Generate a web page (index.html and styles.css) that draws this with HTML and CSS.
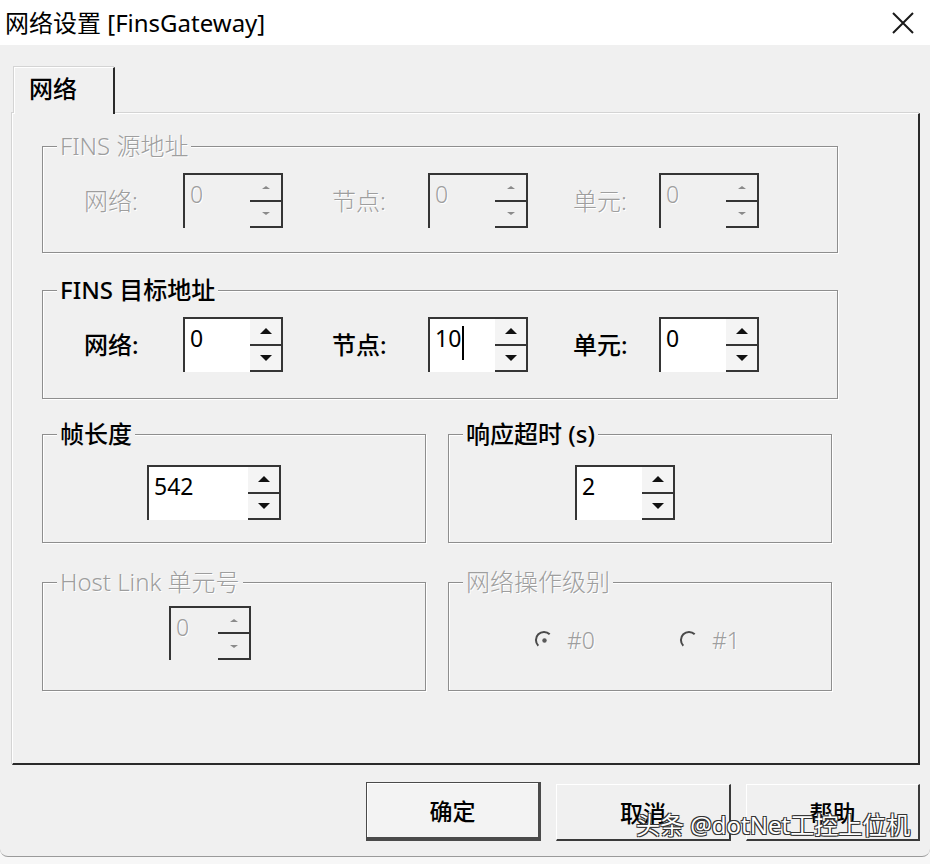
FILE: index.html
```html
<!DOCTYPE html>
<html lang="zh-CN">
<head>
  <meta charset="UTF-8" />
  <title>网络设置 [FinsGateway]</title>
  <link rel="stylesheet" href="styles.css">
</head>
<body>

  <div class="window">
    <div class="titlebar">
      <span class="title">网络设置 [FinsGateway]</span>
      <span class="close">
        <svg width="22" height="22" viewBox="0 0 22 22">
          <path d="M1 1 L21 21 M21 1 L1 21" stroke="#1a1a1a" stroke-width="2" fill="none"/>
        </svg>
      </span>
    </div>

    <div class="client">
      <div class="tabs">
        <div class="tab">网络</div>
      </div>

      <div class="tab-panel">
        <!-- FINS source address (disabled) -->
        <div class="group group-full disabled">
          <div class="legend">FINS 源地址</div>
          <div class="addr-row">
            <span class="label">网络:</span>
            <div class="spin"><div class="spin-text">0</div><div class="spin-btns"><span class="spin-up"></span><span class="spin-down"></span></div></div>
            <span class="label">节点:</span>
            <div class="spin"><div class="spin-text">0</div><div class="spin-btns"><span class="spin-up"></span><span class="spin-down"></span></div></div>
            <span class="label">单元:</span>
            <div class="spin"><div class="spin-text">0</div><div class="spin-btns"><span class="spin-up"></span><span class="spin-down"></span></div></div>
          </div>
        </div>

        <!-- FINS target address -->
        <div class="group group-full group-target">
          <div class="legend">FINS 目标地址</div>
          <div class="addr-row">
            <span class="label">网络:</span>
            <div class="spin"><div class="spin-text">0</div><div class="spin-btns"><span class="spin-up"></span><span class="spin-down"></span></div></div>
            <span class="label">节点:</span>
            <div class="spin"><div class="spin-text">10<span class="caret"></span></div><div class="spin-btns"><span class="spin-up"></span><span class="spin-down"></span></div></div>
            <span class="label">单元:</span>
            <div class="spin"><div class="spin-text">0</div><div class="spin-btns"><span class="spin-up"></span><span class="spin-down"></span></div></div>
          </div>
        </div>

        <div class="group-row row-frame">
          <div class="group frame-len">
            <div class="legend">帧长度</div>
            <div class="spin spin-wide"><div class="spin-text">542</div><div class="spin-btns"><span class="spin-up"></span><span class="spin-down"></span></div></div>
          </div>
          <div class="group timeout">
            <div class="legend">响应超时 (s)</div>
            <div class="spin"><div class="spin-text">2</div><div class="spin-btns"><span class="spin-up"></span><span class="spin-down"></span></div></div>
          </div>
        </div>

        <div class="group-row row-host">
          <div class="group host-link disabled">
            <div class="legend">Host Link 单元号</div>
            <div class="spin spin-small"><div class="spin-text">0</div><div class="spin-btns"><span class="spin-up"></span><span class="spin-down"></span></div></div>
          </div>
          <div class="group op-level disabled">
            <div class="legend">网络操作级别</div>
            <div class="radios">
              <label class="radio">
                <svg width="20" height="20" viewBox="0 0 20 20">
                  <path d="M4.3 15.7 A8 8 0 0 1 15.7 4.3" stroke="#4a4a4a" stroke-width="2" fill="none"/>
                  <circle cx="10.5" cy="10.5" r="2.2" fill="#5a5a5a"/>
                </svg>
                <span>#0</span>
              </label>
              <label class="radio">
                <svg width="20" height="20" viewBox="0 0 20 20">
                  <path d="M4.3 15.7 A8 8 0 0 1 15.7 4.3" stroke="#4a4a4a" stroke-width="2" fill="none"/>
                </svg>
                <span>#1</span>
              </label>
            </div>
          </div>
        </div>
      </div>

      <div class="buttons">
        <button class="btn btn-default">确定</button>
        <button class="btn">取消</button>
        <button class="btn btn-help">帮助</button>
      </div>
    </div>

    <div class="watermark">头条 @dotNet工控上位机</div>
  </div>

</body>
</html>
```

FILE: styles.css
```css
* {
  box-sizing: border-box;
}

html {
  background: #f7f7f7;
}

body {
  margin: 0;
  font-family: "Noto Sans", "Noto Sans CJK SC", sans-serif;
  font-size: 24px;
  color: #000;
}

.window {
  position: relative;
  width: 930px;
  height: 857px;
  background: #f0f0f0;
  border-bottom: 1px solid #9a9a9a;
  border-radius: 0 0 8px 8px;
  overflow: hidden;
}

/* Title bar */
.titlebar {
  display: flex;
  align-items: center;
  height: 45px;
  padding-left: 5px;
  background: #fff;
}

.title {
  font-size: 24px;
  line-height: 30px;
}

.close {
  margin-left: auto;
  margin-right: 16px;
  display: flex;
}

/* Client area */
.client {
  padding: 22px 10px 0 12px;
}

.tabs {
  display: flex;
}

.tab {
  position: relative;
  z-index: 1;
  width: 101px;
  height: 47px;
  margin-left: 2px;
  margin-bottom: -1px;
  padding: 6px 0 0 14px;
  line-height: 30px;
  font-weight: 500;
  background: #f0f0f0;
  border-top: 1px solid #fff;
  border-left: 1px solid #fff;
  border-right: 2px solid #2a2a2a;
  box-shadow: -1px -1px 0 #d4d4d4;
}

.tab-panel {
  height: 652px;
  padding: 32px 0 0 29px;
  border-top: 1px solid #fff;
  border-left: 1px solid #fff;
  border-right: 2px solid #2a2a2a;
  border-bottom: 2px solid #2a2a2a;
  box-shadow: -1px -1px 0 #d4d4d4;
}

/* Group boxes */
.group {
  position: relative;
  height: 109px;
  border: 1px solid #8e8e8e;
  box-shadow: inset 1px 1px 0 #fff, 1px 1px 0 #fff;
}

.group-full {
  width: 796px;
  height: 107px;
  padding: 26px 0 0 41px;
}

.group-target {
  margin-top: 37px;
  height: 109px;
}

.legend {
  position: absolute;
  top: -16px;
  left: 14px;
  padding: 0 3px;
  line-height: 30px;
  background: #f0f0f0;
  font-weight: 500;
  white-space: nowrap;
}

.group-row {
  display: grid;
  grid-template-columns: 384px 384px;
  column-gap: 22px;
}

.row-frame {
  margin-top: 35px;
}

.row-host {
  margin-top: 39px;
}

.frame-len {
  padding: 30px 0 0 104px;
}

.timeout {
  padding: 30px 0 0 126px;
}

.host-link {
  padding: 23px 0 0 126px;
}

.op-level {
  padding: 43px 0 0 85px;
}

.addr-row {
  display: grid;
  grid-template-columns: 99px 149px 96px 145px 86px 100px;
  align-items: center;
}

.label {
  font-weight: 500;
  line-height: 30px;
}

/* Spin boxes */
.spin {
  display: flex;
  width: 100px;
  height: 55px;
  background: #fff;
  border-top: 2px solid #353535;
  border-left: 2px solid #353535;
}

.spin-wide {
  width: 134px;
}

.spin-small {
  width: 82px;
  height: 54px;
}

.spin-text {
  flex: 1;
  padding: 6px 0 0 5px;
  font-size: 23px;
  line-height: 26px;
}

.caret {
  display: inline-block;
  width: 2px;
  height: 34px;
  margin-left: 1px;
  vertical-align: top;
  margin-top: 1px;
  background: #000;
}

.spin-btns {
  display: flex;
  flex-direction: column;
  width: 33px;
  background: #f4f4f4;
  border-right: 2px solid #353535;
  border-bottom: 2px solid #353535;
}

.spin-up,
.spin-down {
  flex: 1;
  display: flex;
  align-items: center;
  justify-content: center;
}

.spin-up {
  border-bottom: 2px solid #353535;
}

.spin-up::after {
  content: "";
  border-left: 6px solid transparent;
  border-right: 6px solid transparent;
  border-bottom: 6px solid #111;
}

.spin-down::after {
  content: "";
  border-left: 6px solid transparent;
  border-right: 6px solid transparent;
  border-top: 6px solid #111;
}

/* Disabled look */
.disabled .legend,
.disabled .label,
.disabled .spin-text,
.disabled .radio span {
  color: #9e9e9e;
  font-weight: 300;
  text-shadow: 1px 1px 0 #fff;
}

.disabled .spin,
.disabled .spin-btns {
  background: #f0f0f0;
}

.disabled .spin-up::after {
  border-left-width: 4px;
  border-right-width: 4px;
  border-bottom: 3px solid #8a8a8a;
}

.disabled .spin-down::after {
  border-left-width: 4px;
  border-right-width: 4px;
  border-top: 3px solid #8a8a8a;
}

/* Radios */
.radios {
  display: flex;
  gap: 84px;
}

.radio {
  display: flex;
  align-items: center;
  gap: 13px;
  font-size: 23px;
  line-height: 28px;
}

/* Dialog buttons */
.buttons {
  display: flex;
  justify-content: flex-end;
  align-items: flex-end;
  gap: 15px;
  margin-top: 17px;
}

.btn {
  width: 175px;
  height: 57px;
  font-family: inherit;
  font-size: 23px;
  font-weight: 500;
  color: #000;
  background: #f0f0f0;
  border: none;
  border-top: 1px solid #fff;
  border-left: 1px solid #fff;
  border-right: 2px solid #3a3a3a;
  border-bottom: 2px solid #3a3a3a;
  padding: 0;
}

.btn-help {
  width: 174px;
}

.btn-default {
  height: 59px;
  background: #f3f3f3;
  border: 1px solid #4a4a4a;
  border-right-width: 3px;
  border-bottom-width: 4px;
  box-shadow: inset 1px 1px 0 #fff;
}

/* Watermark overlay */
.watermark {
  position: absolute;
  left: 636px;
  top: 810px;
  font-size: 24px;
  line-height: 30px;
  color: #fff;
  white-space: nowrap;
  text-shadow: 1px 1px 0 #333, -1px -1px 0 #333, 1px -1px 0 #333, -1px 1px 0 #333;
}
```
